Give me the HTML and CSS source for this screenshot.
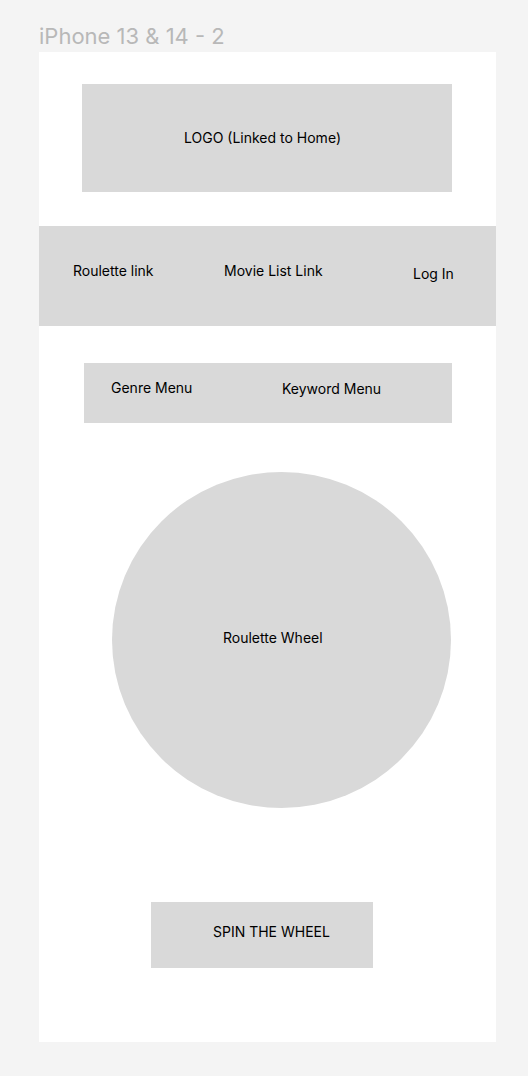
FILE: index.html
```html
<!DOCTYPE html>
<html lang="en">
<head>
  <meta charset="UTF-8" />
  <meta name="viewport" content="width=device-width, initial-scale=1.0"/>
  <title>iPhone 13 &amp; 14 - 2</title>
  <link rel="stylesheet" href="styles.css">
</head>
<body>
  <div class="canvas">
    <div class="frame-label">iPhone 13 &amp; 14 - 2</div>

    <div class="frame">
      <a class="logo" href="#">LOGO (Linked to Home)</a>

      <nav class="nav">
        <a class="nav-roulette" href="#">Roulette link</a>
        <a class="nav-movies" href="#">Movie List Link</a>
        <a class="nav-login" href="#">Log In</a>
      </nav>

      <div class="menus">
        <div class="menu-genre">Genre Menu</div>
        <div class="menu-keyword">Keyword Menu</div>
      </div>

      <div class="wheel">Roulette Wheel</div>

      <button class="spin">SPIN THE WHEEL</button>
    </div>
  </div>
</body>
</html>
```

FILE: styles.css
```css
body {
  margin: 0;
  background-color: #f4f4f4;
  font-family: 'Inter', 'Noto Sans', sans-serif;
  color: #000;
}

a {
  color: inherit;
  text-decoration: none;
}

.canvas {
  padding: 24px 0 34px 39px;
}

.frame-label {
  font-size: 22px;
  line-height: 24px;
  color: #b8b8b8;
  margin-bottom: 4px;
}

.frame {
  width: 457px;
  height: 990px;
  background-color: #fff;
  display: flex;
  flex-direction: column;
  font-size: 14px;
  line-height: 17px;
}

/* all the placeholder blocks share the figma grey */
.logo,
.nav,
.menus,
.wheel,
.spin {
  background-color: #d9d9d9;
}

.logo {
  margin: 32px 0 0 43px;
  width: 370px;
  height: 108px;
  box-sizing: border-box;
  padding: 0 0 2px 102px;
  display: flex;
  align-items: center;
}

.nav {
  margin-top: 34px;
  height: 100px;
  box-sizing: border-box;
  padding: 36px 0 0 34px;
  display: flex;
  align-items: flex-start;
}

.nav-roulette {
  width: 151px;
}

.nav-movies {
  width: 189px;
}

.nav-login {
  margin-top: 3px;
}

.menus {
  margin: 37px 0 0 45px;
  width: 368px;
  height: 60px;
  box-sizing: border-box;
  padding: 16px 0 0 27px;
  display: flex;
  align-items: flex-start;
}

.menu-genre {
  width: 171px;
}

.menu-keyword {
  margin-top: 1px;
}

.wheel {
  margin: 49px 0 0 73px;
  width: 339px;
  height: 336px;
  border-radius: 50%;
  box-sizing: border-box;
  padding: 0 0 6px 111px;
  display: flex;
  align-items: center;
}

.spin {
  margin: 94px 0 0 112px;
  width: 222px;
  height: 66px;
  box-sizing: border-box;
  padding: 0 0 8px 62px;
  border: none;
  font-family: inherit;
  font-size: 14px;
  line-height: 17px;
  color: #000;
  text-align: left;
  display: flex;
  align-items: center;
}
```
